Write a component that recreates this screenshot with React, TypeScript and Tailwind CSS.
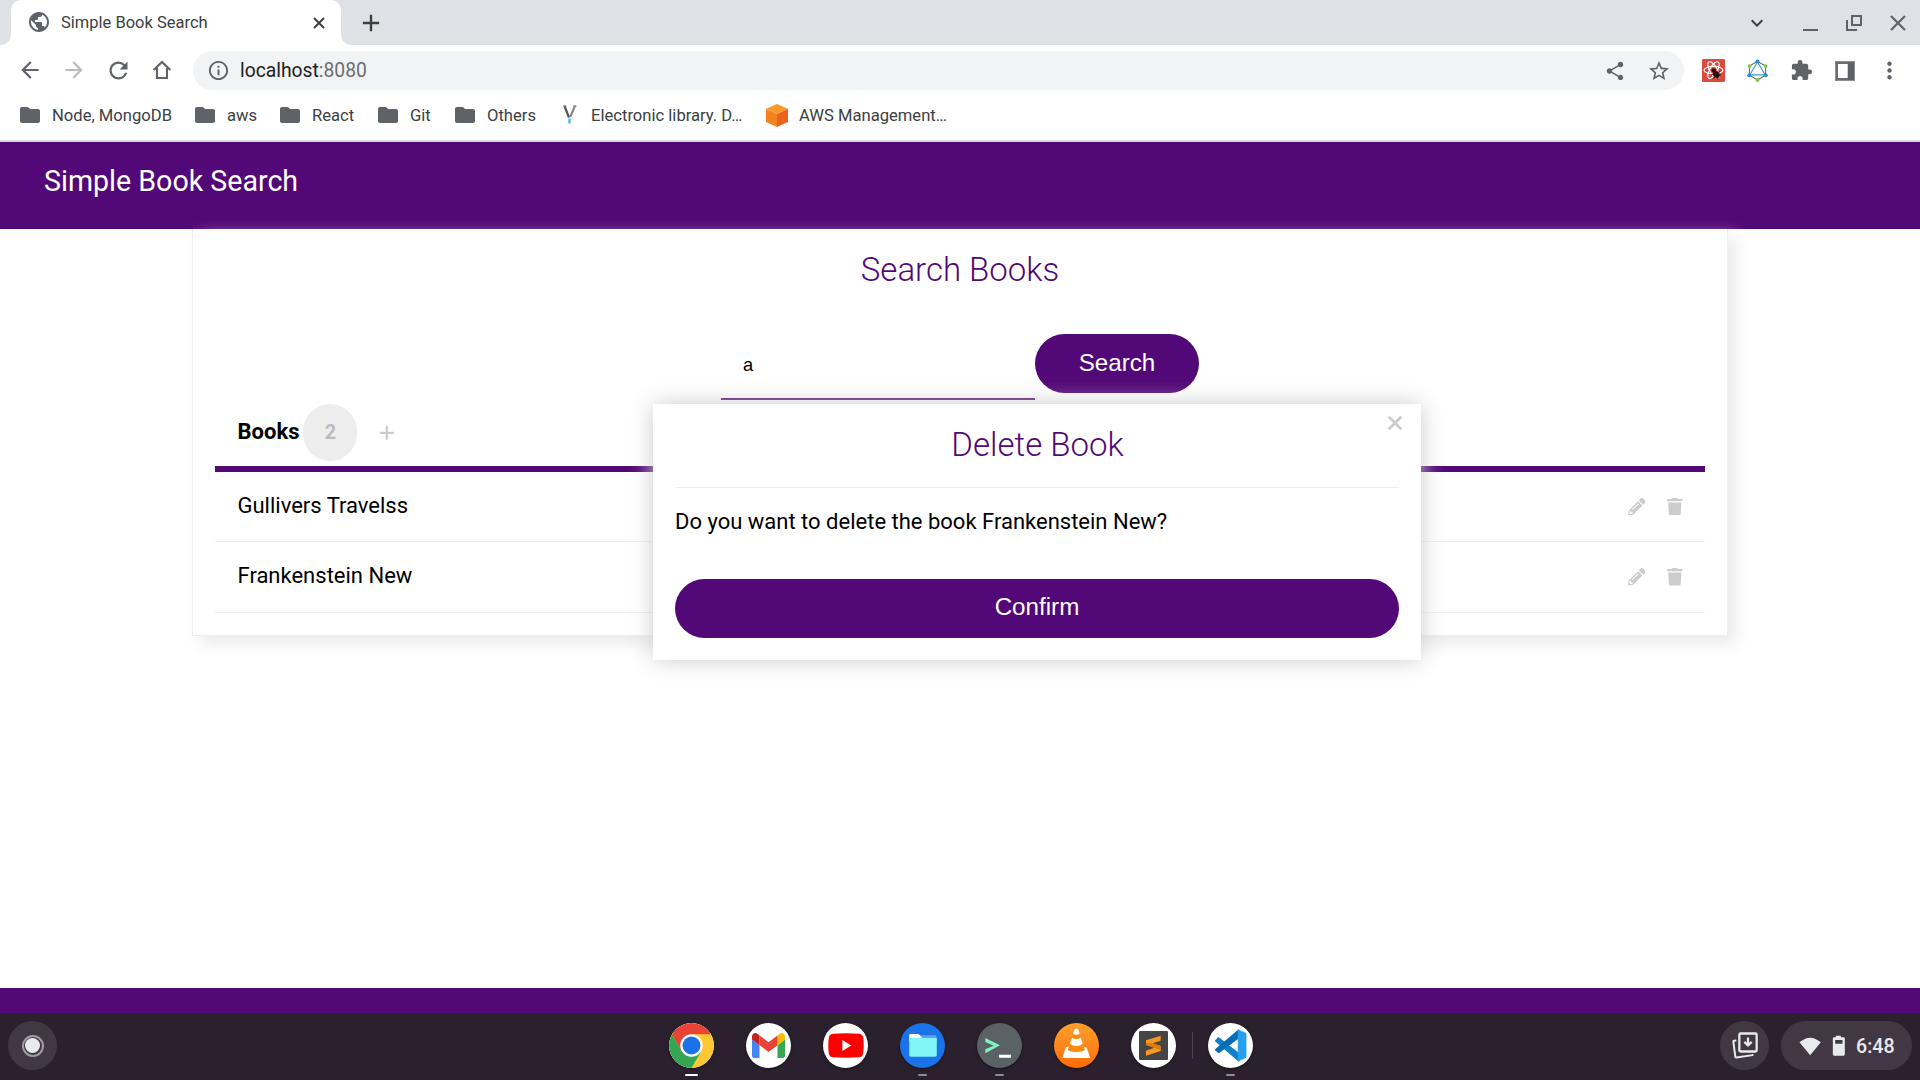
import React from "react";
import {
  MdAdd, MdArrowBack, MdArrowForward, MdExtension, MdFolder, MdInfoOutline,
  MdKeyboardArrowDown, MdMoreVert, MdPublic, MdRefresh, MdShare, MdStarBorder,
} from "react-icons/md";
import { FaPencilAlt, FaTrash } from "react-icons/fa";
import { FaPlus, FaXmark } from "react-icons/fa6";

type SvgProps = { className?: string };

const HomeIcon = ({ className }: SvgProps) => (
  <svg viewBox="0 0 20 20" className={className} fill="none" stroke="currentColor" strokeWidth="2.1">
    <path d="M1.6 10 10 1.9 18.4 10" />
    <path d="M5 8v10h10V8" />
  </svg>
);

const SidePanelIcon = ({ className }: SvgProps) => (
  <svg viewBox="0 0 20 20" className={className}>
    <path d="M0 0h20v20H0z" fill="#8b8f93" />
    <path d="M1 1h18v18H1z" fill="#6a6e73" />
    <path d="M13 1h6v18h-6z" fill="#5f6368" />
    <path d="M3 3h9.700v14H3z" fill="#fff" />
  </svg>
);

const GraphIcon = ({ className }: SvgProps) => (
  <svg viewBox="498 177 68 68" className={className}>
    <path d="M532 184 556 198v27l-24 14-24-14v-27z" fill="none" stroke="#5b6066" strokeWidth="3" />
    <path d="M532 186 555 224h-46z" fill="none" stroke="#3d96d2" strokeWidth="3.4" />
    <g fill="#2e8fd0"><circle cx="532" cy="184" r="5.8" /><circle cx="556.500" cy="225" r="5.8" /><circle cx="507.500" cy="225" r="5.8" /></g>
    <g fill="#7cc84f"><circle cx="532" cy="239" r="5.8" /><circle cx="508.500" cy="198" r="5.8" /><circle cx="556" cy="198" r="5.8" /></g>
  </svg>
);

const ReactBugIcon = ({ className }: SvgProps) => (
  <svg viewBox="0 0 68 68" className={className}>
    <rect width="68" height="68" rx="4" fill="#dc4a3d" />
    <g fill="none" stroke="#fff" strokeWidth="3.4">
      <ellipse cx="34" cy="33" rx="28" ry="11" />
      <ellipse cx="34" cy="33" rx="28" ry="11" transform="rotate(60 34 33)" />
      <ellipse cx="34" cy="33" rx="28" ry="11" transform="rotate(120 34 33)" />
    </g>
    <path d="M32 40 46 34 56 46 46 60 34 56z" fill="#dc4a3d" />
    <g fill="#1c1210" stroke="#1c1210" strokeWidth="2.6">
      <circle cx="34" cy="34" r="5" />
      <ellipse cx="42" cy="46" rx="7" ry="10" transform="rotate(-45 42 46)" />
      <path d="M39 37l2-8M46 40l8-3M50 47l6 0M46 53l1 8M39 52l-4 6M34 44l-7 3" fill="none" />
    </g>
  </svg>
);

const LibraryIcon = ({ className }: SvgProps) => (
  <svg viewBox="0 0 14 20" className={className} fill="none">
    <path d="M1.500 1 6 12.500" stroke="#555" strokeWidth="2.2" />
    <path d="M12 1 7.200 12" stroke="#808386" strokeWidth="2" />
    <path d="M0 1h3.500M10 1h3.500" stroke="#777" strokeWidth="1" />
    <path d="M6.500 13.500V18.500" stroke="#3eb4e6" strokeWidth="2.2" />
  </svg>
);

const AwsIcon = ({ className }: SvgProps) => (
  <svg viewBox="0 0 22 23" className={className}>
    <path d="M11 0 22 4.800 11 10 0 4.800z" fill="#fb9a2c" />
    <path d="M0 4.800 11 10v13L0 18z" fill="#f58220" />
    <path d="M22 4.800 11 10v13l11-5z" fill="#ee621f" />
  </svg>
);

const ChromeIcon = () => (
  <svg viewBox="0 0 48 48" className="size-[45px]">
    <circle cx="24" cy="24" r="24" fill="#fbc831" />
    <path d="M24 12H44.780A24 24 0 0 0 3.220 12L13.610 30 24 24z" fill="#e84335" />
    <path d="M3.220 12A24 24 0 0 0 24 48L34.390 30 24 24 13.610 30z" fill="#34a653" />
    <circle cx="24" cy="24" r="12" fill="#fff" />
    <circle cx="24" cy="24" r="9.600" fill="#1b72e8" />
  </svg>
);

const GmailIcon = () => (
  <svg viewBox="52 42 88 66" className="w-[33px] h-[25px]">
    <path fill="#4285f4" d="M58 108h14V74L52 59v43c0 3.320 2.690 6 6 6" />
    <path fill="#34a853" d="M120 108h14c3.320 0 6-2.690 6-6V59l-20 15" />
    <path fill="#fbbc04" d="M120 48v26l20-15v-8c0-7.420-8.470-11.650-14.400-7.200" />
    <path fill="#ea4335" d="M72 74V48l24 18 24-18v26L96 92" />
    <path fill="#c5221f" d="M52 51v8l20 15V48l-5.600-4.200c-5.940-4.450-14.400-.22-14.400 7.200" />
  </svg>
);

const YoutubeIcon = () => (
  <svg viewBox="0 0 108 76" className="w-[36px] h-[25px]">
    <path d="M14 2Q54-1 94 2 105 3 106.500 15 109 38 106.500 60 105 73 94 74 54 77 14 74 3 73 1.500 60-1 38 1.500 15 3 3 14 2z" fill="#f00" />
    <path d="M43 21 70 38 43 55z" fill="#fff" />
  </svg>
);

const FilesIcon = () => (
  <svg viewBox="774 100 84 70" className="w-[28px] h-[23px]">
    <path d="M800 104h53q4 0 4 4v20H790z" fill="#669df6" />
    <path d="M774 104q0-4 4-4h22q3 0 5 2l9 10v10h-40z" fill="#fff" />
    <path d="M774 112h84v52q0 5-5 5h-74q-5 0-5-5z" fill="#7ff5f6" />
  </svg>
);

const TerminalIcon = () => (
  <svg viewBox="51 67 135 135" className="size-[45px]">
    <path d="M76 112 120 134 76 158V146L101 135 76 124z" fill="#7df3c0" />
    <path d="M117 162h36v9h-36z" fill="#fff" />
  </svg>
);

const VlcIcon = () => (
  <svg viewBox="282 69 135 135" className="size-[45px]">
    <path d="M325 140h48l6 1 11 30q1 3-2 3h-78q-3 0-2-3l9-28q1-3 4-3z" fill="#fff" />
    <path d="M341 100h17l16 48q-1 8-25 8t-25-8z" fill="#f98a0c" />
    <path d="M342 92q1-6 7-6t7 6l3 9q-3 3-10 3t-10-3z" fill="#fff" />
    <path d="M336 113q5 4 13 4t13-4l6 17q-4 8-19 8t-19-8z" fill="#fff" />
  </svg>
);

const SublimeIcon = () => (
  <svg viewBox="537 93 87 87" className="size-[29px]">
    <rect x="537" y="93" width="87" height="87" rx="4" fill="#454545" />
    <path d="M602 107v15l-24 8 24 8v15l-44 14v-15l25-9-25-8v-14z" fill="#f8981f" />
    <path d="M558 129v6l44 15v-12l-24-8z" fill="#dc7d10" />
  </svg>
);

const VscodeIcon = () => (
  <svg viewBox="743 68 136 136" className="size-[45px]">
    <path d="M767 122 775 114 836 162V181z" fill="#0f7fcb" stroke="#0f7fcb" strokeWidth="6" strokeLinejoin="round" />
    <path d="M767 149 836 91V111L775 156z" fill="#0a6cb4" stroke="#0a6cb4" strokeWidth="6" strokeLinejoin="round" />
    <path d="M834 89 858 99V172L834 183z" fill="#25a0ee" stroke="#25a0ee" strokeWidth="2" strokeLinejoin="round" />
  </svg>
);

const HoldingIcon = () => (
  <svg viewBox="126 188 78 80" className="w-[26px] h-[27px]" fill="none" stroke="#e8eaed" strokeWidth="6.8">
    <rect x="148" y="192" width="52" height="54" rx="4" />
    <path d="M174 204v23M163 217l11 11 11-11" />
    <path d="M139 213l-8 1q-1 0-1 2l6 46q1 2 3 2l48-7 3-2" strokeWidth="6" />
  </svg>
);

const StatusIcons = () => (
  <svg viewBox="328 196 140 66" className="w-[47px] h-[22px]" fill="#e8eaed">
    <path d="M361 257 329 218Q361 190 393 218z" />
    <path d="M438 198h15v5h8q4 0 4 4v47q0 4-4 4h-28q-4 0-4-4v-47q0-4 4-4h5zM436 211v11h22v-11z" fillRule="evenodd" />
  </svg>
);

const BOOKMARKS = [
  { label: "Node, MongoDB", box: "w-[175px]", icon: "folder" },
  { label: "aws", box: "w-[85px]", icon: "folder" },
  { label: "React", box: "w-[98px]", icon: "folder" },
  { label: "Git", box: "w-[77px]", icon: "folder" },
  { label: "Others", box: "w-[104px]", icon: "folder" },
  { label: "Electronic library. D…", box: "w-[208px]", icon: "library" },
  { label: "AWS Management…", box: "w-[190px]", icon: "aws" },
];

const TabStrip = () => (
  <div className="flex h-[45px] items-stretch bg-[#dee1e6] text-[#3c4043]">
    <div className="w-[11px] bg-white"><div className="h-full rounded-br-[10px] bg-[#dee1e6]" /></div>
    <div className="flex w-[330px] bg-[#dee1e6]">
      <div className="flex w-full items-center rounded-t-[10px] bg-white pl-[16px] pr-[16px] pb-px">
        <MdPublic className="size-[24px] text-[#5f6368]" />
        <span className="ml-[10px] flex-1 pt-px text-[16.5px] leading-[20px]">Simple Book Search</span>
        <svg viewBox="0 0 12 12" className="mt-px size-[12px]" fill="none" stroke="currentColor" strokeWidth="2"><path d="M1 1l10 10M11 1 1 11" /></svg>
      </div>
    </div>
    <div className="w-[11px] bg-white"><div className="h-full rounded-bl-[10px] bg-[#dee1e6]" /></div>
    <div className="flex flex-1 items-center pl-[5px]">
      <MdAdd className="size-[28px]" />
      <div className="ml-auto flex items-center text-[#5f6368]">
        <div className="flex w-[53px] justify-center pr-[9px]"><MdKeyboardArrowDown className="size-[24px] text-[#3c4043]" /></div>
        <div className="flex w-[44px] justify-center pt-[14px]"><div className="h-[2px] w-[15px] bg-[#5f6368]" /></div>
        <div className="flex w-[44px] justify-center">
          <svg viewBox="0 0 16 16" className="size-[16px]" fill="none" stroke="currentColor" strokeWidth="2"><path d="M6 1h9v9H6z" /><path d="M1 5v10h10" /></svg>
        </div>
        <div className="flex w-[44px] justify-center">
          <svg viewBox="0 0 16 16" className="size-[16px]" fill="none" stroke="currentColor" strokeWidth="2.2"><path d="M1 1l14 14M15 1 1 15" /></svg>
        </div>
      </div>
    </div>
  </div>
);

const Slot = ({ children }: { children: React.ReactNode }) => (
  <div className="flex w-[44px] items-center justify-center">{children}</div>
);

const Toolbar = () => (
  <div className="flex h-[51px] items-center bg-white pl-[8px] pt-[6px] pb-[6px] text-[#5f6368]">
    <div className="flex pb-px">
      <Slot><MdArrowBack className="size-[26px]" /></Slot>
      <Slot><MdArrowForward className="size-[26px] text-[#babcbe]" /></Slot>
      <Slot><MdRefresh className="size-[27px]" /></Slot>
      <Slot><HomeIcon className="size-[20px]" /></Slot>
    </div>
    <div className="ml-[9px] flex h-[39px] w-[1491px] items-center rounded-full bg-[#f1f3f4] pl-[14px] pr-[3px]">
      <MdInfoOutline className="size-[23px]" />
      <span className="ml-[10px] flex-1 text-[19.3px] leading-[24px] text-[#202124]">localhost<span className="text-[#6b6f73]">:8080</span></span>
      <Slot><MdShare className="size-[22px]" /></Slot>
      <Slot><MdStarBorder className="size-[24px]" /></Slot>
    </div>
    <div className="ml-[7px] flex">
      <Slot><ReactBugIcon className="size-[23px]" /></Slot>
      <Slot><GraphIcon className="size-[23px]" /></Slot>
      <Slot><MdExtension className="size-[23px]" /></Slot>
      <Slot><SidePanelIcon className="size-[20px]" /></Slot>
      <Slot><MdMoreVert className="size-[27px]" /></Slot>
    </div>
  </div>
);

const BookmarksBar = () => (
  <div className="flex h-[46px] items-center border-b-2 border-[#dadce0] bg-white pl-[20px] pb-[5px] text-[16.6px] leading-[20px] text-[#3c4043]">
    {BOOKMARKS.map((b) => (
      <div key={b.label} className={`flex items-center whitespace-nowrap ${b.box}`}>
        <span className="flex w-[32px] items-center pb-px">
          {b.icon === "folder" && <MdFolder className="-ml-[2px] size-[24px] text-[#5f6368]" />}
          {b.icon === "library" && <LibraryIcon className="ml-[4px] h-[20px] w-[14px]" />}
          {b.icon === "aws" && <AwsIcon className="-ml-px h-[23px] w-[22px]" />}
        </span>
        {b.label}
      </div>
    ))}
  </div>
);

const BookRow = ({ title, height, lift }: { title: string; height: string; lift: string }) => (
  <div className={`flex items-center border-b border-[#eee] pl-[22.5px] pr-[21px] ${height}`}>
    <span className={`flex-1 ${lift}`}>{title}</span>
    <FaPencilAlt className="size-[17.6px] text-[#ccc]" />
    <FaTrash className="ml-[21px] size-[17.6px] text-[#ccc]" />
  </div>
);

const DeleteDialog = () => (
  <div className="absolute left-[653px] top-[262px] flex h-[256px] w-[768px] flex-col bg-white px-[22px] shadow-[0_0_22px_#ccc]">
    <h2 className="mt-[22px] h-[62px] border-b border-[#eee] pl-px text-center text-[33px] font-light leading-[38px] text-[#520876]">Delete Book</h2>
    <p className="mt-[21px] leading-[26px]">Do you want to delete the book Frankenstein New?</p>
    <button className="mt-[44px] h-[59px] rounded-[29.500px] bg-[#520876] pb-[3px] font-['Liberation_Sans',sans-serif] text-[24.200px] text-white">Confirm</button>
    <FaXmark className="absolute right-[15px] top-[8px] size-[22px] text-[#ccc]" />
  </div>
);

const Page = () => (
  <main className="relative flex h-[871px] flex-col bg-white text-[22px] text-black">
    <header className="h-[87px] bg-[#520876] pl-[44px] pt-[22px] text-[28.600px] leading-[34px] text-white">Simple Book Search</header>
    <section className="mx-auto h-[407px] w-[1536px] border border-t-0 border-[#eee] bg-white px-[22px] shadow-[8px_8px_15px_#eaeaea]">
      <h1 className="pt-[21px] text-center text-[33px] font-light leading-[39px] text-[#520876]">Search Books</h1>
      <form className="mt-[45px] flex items-start justify-center font-['Liberation_Sans',sans-serif]">
        <div className="flex h-[66px] w-[314px] items-center border-b-2 border-[#520876] pb-[2px] pl-[22px] text-[18.330px]">a</div>
        <button type="button" className="h-[59px] w-[164px] rounded-[29.500px] bg-[#520876] text-[24.200px] text-white">Search</button>
      </form>
      <div className="flex h-[72px] items-center border-b-[6px] border-[#520876] pl-[22.5px] pb-px">
        <b className="pb-[3px] font-bold">Books</b>
        <span className="ml-[4px] flex h-[57px] w-[54px] items-center justify-center rounded-[27px] bg-[#ededed] pt-px text-[19.800px] font-bold text-[#bbb]">2</span>
        <FaPlus className="ml-[21px] size-[17.6px] text-[#ccc]" />
      </div>
      <BookRow title="Gullivers Travelss" height="h-[70px]" lift="pb-[2px]" />
      <BookRow title="Frankenstein New" height="h-[71px]" lift="pb-[4px]" />
    </section>
    <DeleteDialog />
    <footer className="mt-auto h-[25px] bg-[#520876]" />
  </main>
);

const ShelfApp = ({ bg, mark, children }: { bg: string; mark?: string; children: React.ReactNode }) => (
  <div className="flex w-[77px] flex-col items-center pt-[10px]">
    <div className={`flex size-[45px] items-center justify-center overflow-hidden rounded-full shadow-[0_1px_3px_rgba(0,0,0,.5)] ${bg}`}>{children}</div>
    {mark && <div className={`mt-[6px] h-[2px] rounded-full ${mark}`} />}
  </div>
);

const Shelf = () => (
  <div className="flex h-[67px] bg-[#2b212e] pl-[8px] pr-[8px]">
    <div className="mt-[8px] flex size-[49px] items-center justify-center rounded-full bg-[#413844]">
      <div className="flex size-[22px] items-center justify-center rounded-full border-2 border-[#a09ca2]"><div className="size-[14.5px] shrink-0 rounded-full bg-[#e8eaed]" /></div>
    </div>
    <div className="ml-[596px] flex">
      <ShelfApp bg="bg-white" mark="w-[13px] bg-white"><ChromeIcon /></ShelfApp>
      <ShelfApp bg="bg-white"><GmailIcon /></ShelfApp>
      <ShelfApp bg="bg-white"><YoutubeIcon /></ShelfApp>
      <ShelfApp bg="bg-[#1a73e8]" mark="w-[9px] bg-[#918c93]"><FilesIcon /></ShelfApp>
      <ShelfApp bg="bg-[#5b6266]" mark="w-[9px] bg-[#918c93]"><TerminalIcon /></ShelfApp>
      <ShelfApp bg="bg-linear-to-b from-[#ffa02d] to-[#ff6a00]"><VlcIcon /></ShelfApp>
      <ShelfApp bg="bg-white"><SublimeIcon /></ShelfApp>
      <div className="-mr-px mt-[19px] h-[27px] w-px bg-[#4b424e]" />
      <ShelfApp bg="bg-white" mark="w-[9px] bg-[#918c93]"><VscodeIcon /></ShelfApp>
    </div>
    <div className="ml-auto mt-[8px] flex gap-[12px]">
      <div className="flex size-[49px] items-center justify-center rounded-full bg-[#413844]"><HoldingIcon /></div>
      <div className="flex h-[49px] w-[131px] items-center rounded-full bg-[#413844] pl-[18px]">
        <StatusIcons />
        <span className="ml-[10px] pt-[3px] text-[19.600px] leading-[24px] font-medium text-[#e8eaed]">6:48</span>
      </div>
    </div>
  </div>
);

export default function App() {
  return (
    <div className="flex h-[1080px] w-[1920px] flex-col overflow-hidden bg-white font-[Roboto,sans-serif]">
      <TabStrip />
      <Toolbar />
      <BookmarksBar />
      <Page />
      <Shelf />
    </div>
  );
}
